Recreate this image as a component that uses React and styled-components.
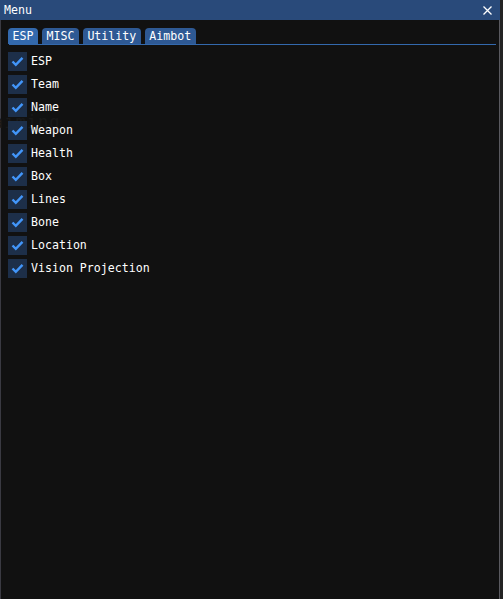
import React, { useState } from 'react';
import styled, { createGlobalStyle } from 'styled-components';

const GlobalStyle = createGlobalStyle`
  html, body {
    margin: 0;
    padding: 0;
    background: #232323;
    height: 100%;
  }
  #root {
    height: 100%;
  }
`;

const options = [
  'ESP',
  'Team',
  'Name',
  'Weapon',
  'Health',
  'Box',
  'Lines',
  'Bone',
  'Location',
  'Vision Projection',
];

const tabs = ['ESP', 'MISC', 'Utility', 'Aimbot'];

function CheckMark() {
  return (
    <svg width="13" height="13" viewBox="0 0 13 13">
      <polyline
        points="1.5,6.5 4.8,9.8 11.5,2.8"
        fill="none"
        stroke="#4296fa"
        strokeWidth="2.4"
      />
    </svg>
  );
}

function CloseIcon() {
  return (
    <svg width="9" height="9" viewBox="0 0 9 9">
      <path d="M0.5 0.5 L8.5 8.5 M8.5 0.5 L0.5 8.5" stroke="#fff" strokeWidth="1.3" />
    </svg>
  );
}

function App() {
  const [active, setActive] = useState(0);
  const [checked, setChecked] = useState(options.map(() => true));

  const toggle = (i) => {
    setChecked(checked.map((c, j) => (j === i ? !c : c)));
  };

  return (
    <Page>
      <GlobalStyle />
      <Window>
        <TitleBar>
          <Title>Menu</Title>
          <CloseButton>
            <CloseIcon />
          </CloseButton>
        </TitleBar>
        <Body>
          <Ghost>aiming</Ghost>
          <TabBar>
            {tabs.map((t, i) => (
              <Tab key={t} $active={i === active} onClick={() => setActive(i)}>
                {t}
              </Tab>
            ))}
          </TabBar>
          <TabLine />
          <List>
            {options.map((o, i) => (
              <Row key={o} onClick={() => toggle(i)}>
                <Box>{checked[i] && <CheckMark />}</Box>
                <Label>{o}</Label>
              </Row>
            ))}
          </List>
        </Body>
      </Window>
    </Page>
  );
}

const Page = styled.div`
  height: 100%;
  display: flex;
  font-family: "DejaVu Sans Mono", "Liberation Mono", monospace;
  font-size: 11.6px;
  color: #ffffff;
`;

const Window = styled.div`
  width: 500px;
  height: 599px;
  box-sizing: border-box;
  border-left: 1px solid #3a3a42;
  border-right: 1px solid #5a5a60;
  background: #111111;
  display: flex;
  flex-direction: column;
`;

const TitleBar = styled.div`
  height: 20px;
  background: #294a7a;
  display: flex;
  align-items: center;
  justify-content: space-between;
  padding: 0 7px 0 4px;
  margin-left: -1px;
  margin-right: -1px;
`;

const Title = styled.span`
  line-height: 20px;
`;

const CloseButton = styled.div`
  width: 11px;
  height: 11px;
  display: flex;
  align-items: center;
  justify-content: center;
  margin-top: 1px;
`;

const Body = styled.div`
  position: relative;
  flex: 1;
  padding: 8px 3px 0 7px;
`;

const Ghost = styled.div`
  position: absolute;
  left: -8px;
  top: 92px;
  font-size: 17px;
  color: #191919;
  letter-spacing: 1px;
`;

const TabBar = styled.div`
  position: relative;
  display: flex;
  gap: 4px;
`;

const Tab = styled.div`
  height: 16px;
  line-height: 17px;
  padding: 0 4.5px;
  border-radius: 4px 4px 0 0;
  background: ${(p) => (p.$active ? '#3369ad' : '#2e5994')};
  cursor: pointer;
`;

const TabLine = styled.div`
  height: 1px;
  background: #3369ad;
  margin-left: 1px;
`;

const List = styled.div`
  position: relative;
  display: flex;
  flex-direction: column;
  gap: 4px;
  padding-top: 7px;
`;

const Row = styled.div`
  display: flex;
  align-items: center;
  gap: 4px;
  height: 19px;
  cursor: pointer;
`;

const Box = styled.div`
  width: 19px;
  height: 19px;
  background: #1d2f49;
  display: flex;
  align-items: center;
  justify-content: center;
`;

const Label = styled.span`
  line-height: 19px;
`;

export default App;
